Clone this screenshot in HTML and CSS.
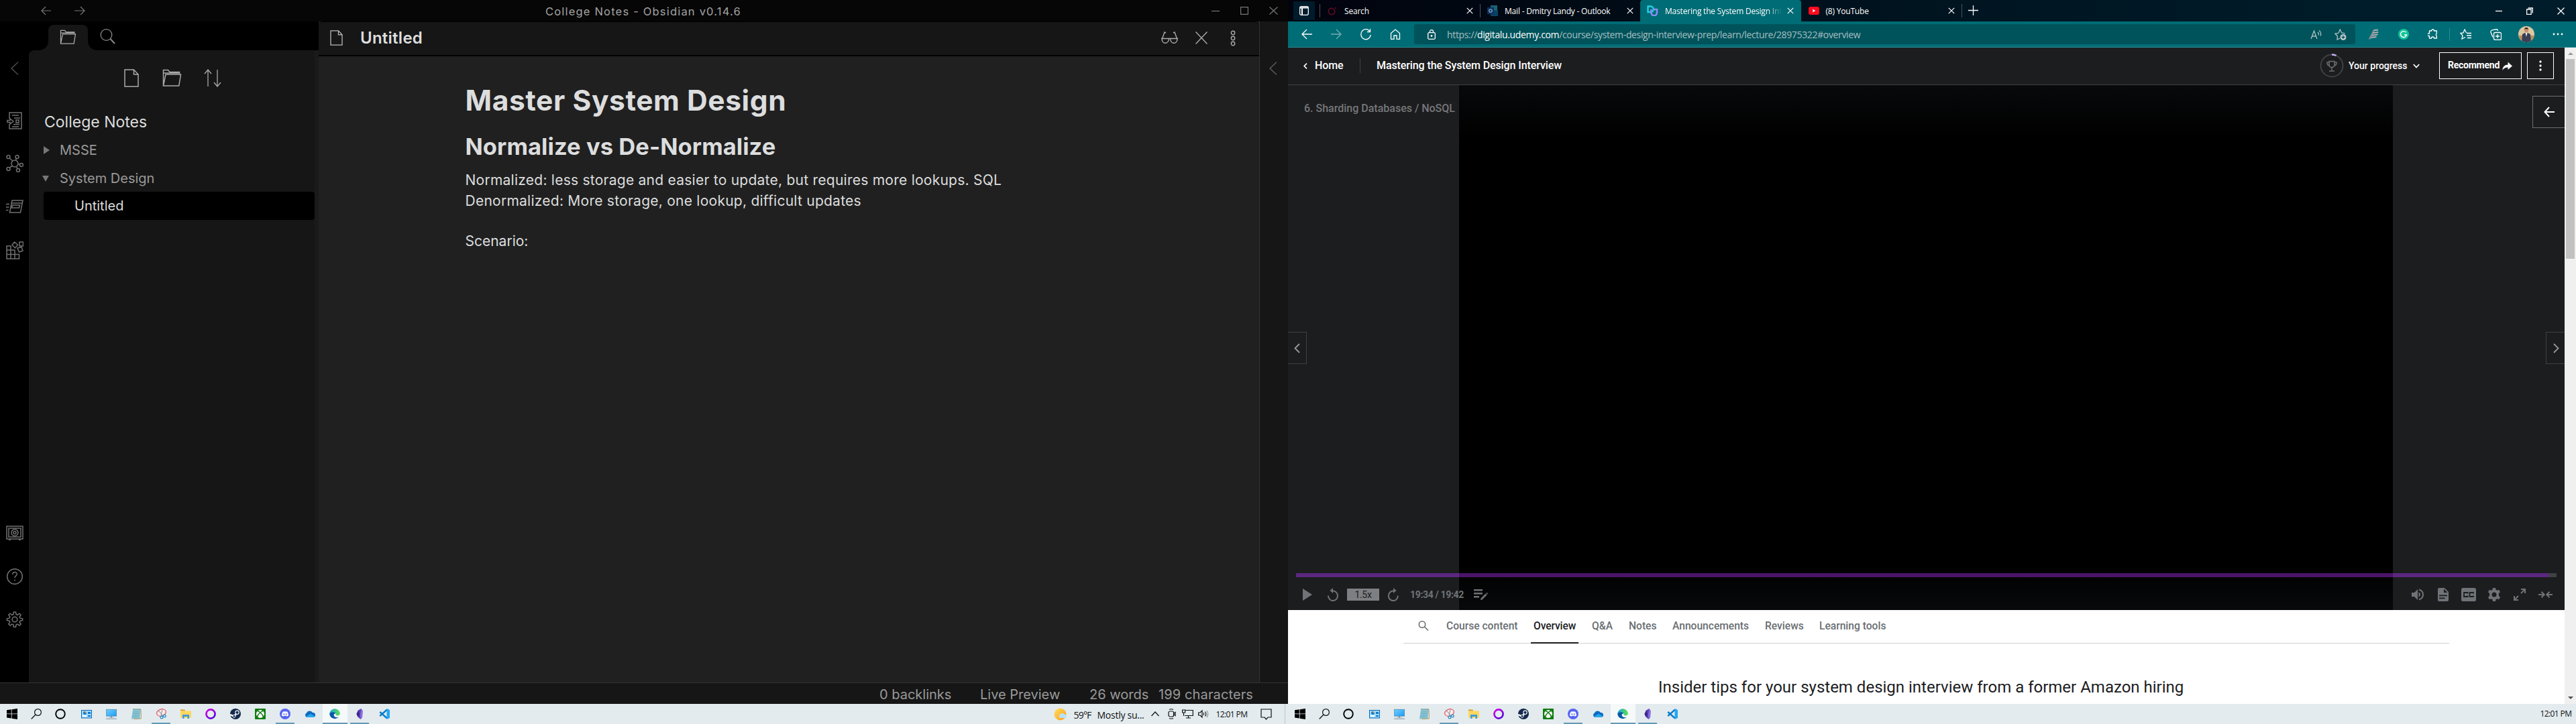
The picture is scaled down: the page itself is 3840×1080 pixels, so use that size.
FILE: index.html
```html
<!DOCTYPE html>
<html lang="en">
<head>
<meta charset="utf-8">
<title>Desktop</title>
<link rel="stylesheet" href="styles.css">
</head>
<body>
<svg class="defs" aria-hidden="true">
  <defs>
    <linearGradient id="g-opera" x1="0" y1="0" x2="1" y2="1"><stop offset="0" stop-color="#d800e8"/><stop offset="1" stop-color="#4b00d8"/></linearGradient>
    <linearGradient id="g-edge" x1="0" y1="0" x2="1" y2="0"><stop offset="0" stop-color="#1aa6e0"/><stop offset="1" stop-color="#5fe04a"/></linearGradient>
    <linearGradient id="g-sun" x1="0" y1="0" x2="1" y2="1"><stop offset="0" stop-color="#ffe05a"/><stop offset="1" stop-color="#ff9a1a"/></linearGradient>
    <linearGradient id="g-mon" x1="0" y1="0" x2="1" y2="1"><stop offset="0" stop-color="#6fd0ff"/><stop offset="1" stop-color="#1e9bf5"/></linearGradient>
    <symbol id="i-win" viewBox="0 0 16 16"><path d="M0 2.3 6.8 1.3V7.5H0zM7.6 1.2 16 0v7.5H7.6zM0 8.3h6.8v6.3L0 13.6zM7.6 8.3H16V16l-8.4-1.2z" fill="#000"/></symbol>
    <symbol id="i-find" viewBox="0 0 16 16"><circle cx="10.5" cy="5.5" r="4.9" fill="none" stroke="#111" stroke-width="1.2"/><path d="M7 9 .7 15.5" stroke="#111" stroke-width="1.3"/></symbol>
    <symbol id="i-ring" viewBox="0 0 16 16"><circle cx="8" cy="8" r="6.8" fill="none" stroke="#000" stroke-width="1.9"/></symbol>
    <symbol id="i-card" viewBox="0 0 16 16"><rect x=".5" y="2.5" width="15" height="11.5" fill="#9fdcff" stroke="#0a66b0"/><circle cx="5.5" cy="6.5" r="2.5" fill="#0a78d0"/><path d="M5.5 4a2.500 2.500 0 0 1 2.500 2.500H5.500z" fill="#ffa62b"/><path d="M10 5h4v3h-4zM10 10h4v2h-4z" fill="#0a78d0"/><path d="M2 11h6" stroke="#fff" stroke-width="2"/></symbol>
    <symbol id="i-mon" viewBox="0 0 16 16"><rect x=".3" y="1.200" width="15.400" height="10" fill="url(#g-mon)" stroke="#4a7c9c" stroke-width=".6"/><path d="M7 11h2v2.500H7z" fill="#6f8c9c"/><path d="M0 15.300h16" stroke="#8aa2b0" stroke-width="1.200"/><path d="M4 13.300h8" stroke="#9ab" stroke-width=".8"/></symbol>
    <symbol id="i-note" viewBox="0 0 16 16"><path d="M3 1.500h12L13.500 15.500H.8z" fill="#8cc7d6"/><path d="M15 1.500l.4 13.500-11 .6" fill="none" stroke="#b79a5c"/><path d="M3.500 5h9.500M3 7.500h9.500M2.600 10h9.500M2.300 12.500h9.500" stroke="#5c9fb4" stroke-width=".7"/><path d="M3.500 1h11" stroke="#365" stroke-width="1.600" stroke-dasharray="1 1"/></symbol>
    <symbol id="i-snip" viewBox="0 0 16 16"><ellipse cx="8.500" cy="6" rx="7" ry="5" transform="rotate(-20 8.500 6)" fill="#fbeaea" stroke="#e0525a" stroke-width="1.200"/><path d="M4 2.500 11 11M10 1.500 8 11" stroke="#8a95a0" stroke-width="1.100"/><circle cx="9" cy="13" r="1.900" fill="none" stroke="#2a8bc8" stroke-width="1.200"/><circle cx="13.300" cy="11" r="1.900" fill="none" stroke="#2a8bc8" stroke-width="1.200"/></symbol>
    <symbol id="i-fold" viewBox="0 0 16 16"><path d="M0 1.500h6l1.500 2H0z" fill="#d99a12"/><path d="M0 3.500h16V14H0z" fill="#ffd75e"/><path d="M3 15V9h10v6h-2.500v-3h-5v3z" fill="#3f9be0"/></symbol>
    <symbol id="i-opera" viewBox="0 0 16 16"><circle cx="8" cy="8" r="6.600" fill="none" stroke="url(#g-opera)" stroke-width="2.600"/></symbol>
    <symbol id="i-steam" viewBox="0 0 16 16"><circle cx="8" cy="8" r="8" fill="#14294d"/><path d="M0 9l6 2.500L10 7" stroke="#fff" stroke-width="2.400" fill="none"/><circle cx="10.500" cy="5.800" r="2.700" fill="#14294d" stroke="#fff" stroke-width="1.100"/><circle cx="6" cy="11.300" r="2" fill="#14294d" stroke="#fff"/></symbol>
    <symbol id="i-xbox" viewBox="0 0 16 16"><rect width="16" height="16" rx="1" fill="#107c10"/><circle cx="8" cy="8" r="6" fill="#fff"/><path d="M4 3.500C6 4 8 6 8 6s2-2 4-2.500M8 6c-3 2.500-4.500 5-4.500 7.500M8 6c3 2.500 4.500 5 4.500 7.500" fill="none" stroke="#107c10" stroke-width="1.600"/></symbol>
    <symbol id="i-disc" viewBox="0 0 16 16"><circle cx="8" cy="8" r="8" fill="#5865f2"/><path d="M4.500 4.800Q8 3.500 11.500 4.800 13 7.500 12.900 10.500L10.700 11.700 10 10.700H6l-.7 1L3.100 10.500Q3 7.500 4.500 4.800z" fill="#fff"/><circle cx="6.300" cy="8.300" r="1.100" fill="#5865f2"/><circle cx="9.700" cy="8.300" r="1.100" fill="#5865f2"/></symbol>
    <symbol id="i-cloud" viewBox="0 0 16 16"><path d="M3.500 13A3.500 3.500 0 0 1 3 6.500 5 5 0 0 1 12 6a3.500 3.500 0 0 1 1 7z" fill="#0f6cc4"/><path d="M2 12 9 8l6.500 3.500A2.500 2.500 0 0 1 13 13H3.500z" fill="#28a8ea"/></symbol>
    <symbol id="i-edge" viewBox="0 0 16 16"><path d="M.2 8A7.900 7.900 0 0 1 15.900 7c.1 2-1.500 3.300-3.300 3.300H9.500C10 9 9.800 6.500 7 6.300 4 6.200.8 7 .2 8z" fill="url(#g-edge)"/><path d="M.2 8C.8 4.800 8.500 4 9.300 7.500 6 6.500 5.500 12 9.500 13c2 .5 4-.3 5-1A8 8 0 0 1 .2 8z" fill="#0c59a4"/><path d="M9 7.500c-2 1-2.200 4.500 1 5.500 1.800.4 3.500-.2 4.500-1-1 .2-3.500.2-5-1.700z" fill="#e9f4fb"/></symbol>
    <symbol id="i-obs" viewBox="0 0 16 16"><path d="M10.500 0 12.500 3.500 12 13 9.500 16 5.500 12.500 3.500 8 6 2.500z" fill="#5b3fb8"/><path d="M10.500 0 12.500 3.500 12 13 9.500 16 9 9z" fill="#8b6fe0"/><path d="M6 2.500 8 9l-2.500 3.500L3.500 8z" fill="#3c2585"/></symbol>
    <symbol id="i-code" viewBox="0 0 16 16"><path d="M1.300 5 12 14.500M1.300 11 12 1.500" stroke="#0b7cc9" stroke-width="2.400"/><path d="M11.500 0 16 2v12l-4.500 2z" fill="#24a8f2"/></symbol>
    <symbol id="i-x" viewBox="0 0 10 10"><path d="M.8.8l8.400 8.400M9.200.8.800 9.200" stroke="currentColor" stroke-width="1.200" fill="none"/></symbol>
    <symbol id="i-folder" viewBox="0 0 28 26"><path d="M1 25V1.500h7l2.500 3H25V8M1 25 4.500 8H27l-2.800 17zM1 6h23" fill="none" stroke="currentColor" stroke-width="1.500"/></symbol>
    <symbol id="i-file" viewBox="0 0 22 27"><path d="M1 1h13.500L21 8v18H1zM14.500 1v7H21" fill="none" stroke="currentColor" stroke-width="1.500"/></symbol>
    <symbol id="i-chev" viewBox="0 0 12 20"><path d="M11 .6 1 10l10 9.400" fill="none" stroke="currentColor" stroke-width="1.300"/></symbol>
  </defs>
</svg>

<div class="desktop">
  <section class="screen">
    <div class="obsidian">
      <header class="ob-title">
        <svg width="15" height="14" viewBox="0 0 15 14"><path d="M15 7H1M7 1 1 7l6 6"/></svg>
        <svg width="16" height="14" viewBox="0 0 16 14"><path d="M0 7h15M9 1l6 6-6 6"/></svg>
        <span class="t-title">College Notes - Obsidian v0.14.6</span>
        <svg width="12" height="12" viewBox="0 0 12 12"><path d="M0 6.500h12"/></svg>
        <svg width="12" height="12" viewBox="0 0 12 12"><path d="M.6.600h10.800v10.800H.6z"/></svg>
        <svg width="13" height="12" viewBox="0 0 13 12"><path d="M.5.500l12 11M12.500.500l-12 11"/></svg>
      </header>
      <div class="ob-body">
        <nav class="ribbon">
          <svg class="r-chev" width="12" height="20"><use href="#i-chev"/></svg>
          <svg class="r-switch" width="24" height="26" viewBox="0 0 24 26"><path d="M4 10V1h18v24H4v-7M8 5h10M11 9h9M10 18.500h9M8 22h10M1 12.500h4V10l5 4-5 4v-2.500H1zM14 12h4v4h-4z"/></svg>
          <svg class="r-graph" width="26" height="26" viewBox="0 0 26 26"><circle cx="13" cy="13" r="5"/><circle cx="3.500" cy="3" r="2.500"/><circle cx="16.500" cy="3" r="2.500"/><circle cx="23" cy="15" r="2.500"/><circle cx="18" cy="23" r="2.500"/><circle cx="3.500" cy="21" r="2.500"/><path d="M5 5l5 4M15.500 5.500 14.500 8M18 14h2.500M15.500 17.500 17 20.500M9.500 16.500 5 19"/></svg>
          <svg width="26" height="20" viewBox="0 0 26 20"><path d="M9 1h16l-3.500 18h-16zM8 5h16M9.500 8h11l-1 4h-11zM0 6.500h5M0 11h4.500M0 15.500h3.500"/></svg>
          <svg width="26" height="27" viewBox="0 0 26 27"><path d="M1 7h6v19H1zM1 13h12v13M1 19.500h18.500V26H1M7 7v6M13 19v7M20 1h5.500v6H20zM12.500 1l5 4-4 5-4.500-4.500zM17 10l6-1.500L25 14l-5.500 2z"/></svg>
          <span class="push"></span>
          <svg width="26" height="22" viewBox="0 0 26 22"><path d="M1 1h24v19H1zM4 4h18v13H4zM4 21.500h3M19 21.500h3M4 8v5"/><circle cx="13" cy="10.500" r="5"/><circle cx="13" cy="10.500" r="2"/></svg>
          <svg class="r-help" width="26" height="24" viewBox="0 0 26 24"><circle cx="13" cy="12" r="11.300"/><path d="M9.800 9c0-5 6.800-4.500 6.500-.5-.2 2.500-3.300 2.500-3.300 5.500M13 16.500v2"/></svg>
          <svg width="26" height="24" viewBox="0 0 26 24"><path d="M11.500 1h3l.6 3.500 2 .8L20 3.200l2.200 2.100-2 2.900.8 2 3.600.6v2.700l-3.600.7-.8 2 2 2.800-2.200 2.100-2.900-2-2 .8-.6 3.400h-3l-.6-3.400-2-.8-2.900 2-2.200-2.100 2-2.800-.8-2-3.600-.7v-2.700l3.600-.6.8-2-2-2.900L6 3.200l2.900 2.100 2-.8z"/><circle cx="13" cy="12" r="3.800"/></svg>
        </nav>
        <aside class="side">
          <div class="side-tabs">
            <span class="side-tab"><svg width="25" height="22"><use href="#i-folder"/></svg></span>
            <svg class="side-find" width="23" height="23" viewBox="0 0 23 23"><circle cx="9.500" cy="9" r="8.300"/><path d="M15.500 15 22 22" stroke-width="2"/></svg>
          </div>
          <div class="side-panel">
            <div class="side-tools">
              <svg width="22" height="27"><use href="#i-file"/></svg>
              <svg width="29" height="26"><use href="#i-folder"/></svg>
              <svg width="26" height="27" viewBox="0 0 26 27"><path d="M6 26V1M1 7l5-6 5 6M20 1v25M15 20l5 6 5-6"/></svg>
            </div>
            <div class="vault"><span class="t-vault">College Notes</span></div>
            <div class="node"><i class="tri right"></i><span class="t-node">MSSE</span></div>
            <div class="node"><i class="tri down"></i><span class="t-node">System Design</span></div>
            <div class="leaf"><span class="t-node">Untitled</span></div>
          </div>
        </aside>
        <main class="editor">
          <header class="ed-head">
            <svg class="file" width="19" height="23"><use href="#i-file"/></svg>
            <span class="t-file">Untitled</span>
            <svg width="25" height="19" viewBox="0 0 25 19"><path d="M1 12 5 1l2 1M24 12 20 1l-2 1M0 10.500h25M1 10.500c0 9 10 9 10.500 0M13.500 10.500c.5 9 10.500 9 10.500 0"/></svg>
            <svg width="18" height="19" viewBox="0 0 18 19"><path d="M.5.500l17 18M17.500.500l-17 18"/></svg>
            <svg width="8" height="24" viewBox="0 0 8 24"><circle cx="4" cy="4" r="2.700"/><circle cx="4" cy="12" r="2.700"/><circle cx="4" cy="20" r="2.700"/></svg>
          </header>
          <article class="note">
            <h1>Master System Design</h1>
            <h2>Normalize vs De-Normalize</h2>
            <p>Normalized: less storage and easier to update, but requires more lookups. SQL</p>
            <p>Denormalized: More storage, one lookup, difficult updates</p>
            <p class="gap">Scenario:</p>
          </article>
        </main>
        <div class="ob-right"><svg width="12" height="20"><use href="#i-chev"/></svg></div>
      </div>
      <footer class="ob-status">
        <span>0 backlinks</span><span>Live Preview</span><span>26 words</span><span class="chars">199 characters</span>
      </footer>
    </div>
    <div class="taskbar">
      <div class="apps">
        <span class="n"><svg><use href="#i-win"/></svg></span><span class="n"><svg><use href="#i-find"/></svg></span><span class="n"><svg><use href="#i-ring"/></svg></span>
        <span class="first"><svg><use href="#i-card"/></svg></span><span><svg><use href="#i-mon"/></svg></span><span><svg><use href="#i-note"/></svg></span><span class="run"><svg><use href="#i-snip"/></svg></span><span><svg><use href="#i-fold"/></svg></span><span><svg><use href="#i-opera"/></svg></span><span><svg><use href="#i-steam"/></svg></span><span><svg><use href="#i-xbox"/></svg></span><span class="run"><svg><use href="#i-disc"/></svg></span><span><svg><use href="#i-cloud"/></svg></span><span class="run on"><svg><use href="#i-edge"/></svg></span><span class="run"><svg><use href="#i-obs"/></svg></span><span><svg><use href="#i-code"/></svg></span>
      </div>
      <div class="tray">
        <svg width="20" height="19" viewBox="0 0 20 19"><circle cx="9.500" cy="9.500" r="9" fill="url(#g-sun)"/><path d="M9 15a3 3 0 0 1 0-5 4 4 0 0 1 7-.5 3 3 0 0 1 1.500 5.500z" fill="#b9e2fa"/></svg>
        <span class="t-wx deg">59°F</span>
        <span class="t-wx">Mostly su...</span>
        <svg width="12" height="8" viewBox="0 0 12 8"><path d="M.5 7 6 1l5.500 6"/></svg>
        <svg width="12" height="16" viewBox="0 0 12 16"><rect x="1" y="4" width="7.500" height="8" rx="2"/><path d="M8.500 7.500 11 5.500v5L8.500 8.500M2 1.500Q5 0 8 1.500M2 14.500Q5 16 8 14.500"/></svg>
        <svg width="17" height="14" viewBox="0 0 17 14"><path d="M5 1.500h11.300v8H4M9.500 9.500V13M6 13h7M.6 1h4v4h-4zM2.500 5v5"/></svg>
        <svg width="17" height="14" viewBox="0 0 17 14"><path d="M.6 5v4h2.500L6 12V2L3.100 5zM8 5q1.500 2 0 4M10.500 3.500q2.500 3.500 0 7"/><path d="M13 2q3.500 5 0 10" stroke-opacity=".4"/></svg>
        <span class="t-clock">12:01 PM</span>
        <svg width="17" height="17" viewBox="0 0 17 17"><path d="M1 1h15v12h-5L8.500 16 6 13H1z"/></svg>
        <i class="peek"></i>
      </div>
    </div>
  </section>

  <section class="screen">
    <div class="edge">
      <header class="tabs">
        <span class="actions"><svg width="14" height="14" viewBox="0 0 14 14"><rect x=".7" y=".7" width="12.600" height="12.600" rx="2"/><path d="M1 2.500h12M4 3v10" stroke-width="2"/></svg></span>
        <div class="tab one"><svg width="14" height="13" viewBox="0 0 14 13"><circle cx="6" cy="7" r="4.700" fill="none" stroke="#5a0b22" stroke-width="1.800"/><circle cx="12" cy="2" r="1.200" fill="#5a0b22"/></svg><span class="t-tab">Search</span><svg class="x"><use href="#i-x"/></svg></div>
        <div class="tab two"><svg width="16" height="16" viewBox="0 0 16 16"><path d="M5 0h10v14H5z" fill="#1a6478"/><path d="M5 8l11-1v9H5z" fill="#0a4164"/><path d="M0 3h10v10H0z" fill="#0a3260"/><circle cx="5" cy="8" r="2.200" fill="none" stroke="#8aa4b8" stroke-width="1.300"/></svg><span class="t-tab">Mail - Dmitry Landy - Outlook</span><svg class="x"><use href="#i-x"/></svg></div>
        <div class="tab three"><svg width="17" height="16" viewBox="0 0 17 16"><path d="M1.500 1.500H6a3.500 4 0 0 1 0 8.500H1.500z" fill="none" stroke="#23cfe6" stroke-width="2.400"/><path d="M6.500 6v5a4 4 0 0 0 8.500 0V6h-5" fill="none" stroke="#8d8cf5" stroke-width="2.600"/></svg><span class="t-tab fade">Mastering the System Design Int</span><svg class="x"><use href="#i-x"/></svg></div>
        <div class="tab four"><svg width="16" height="12" viewBox="0 0 16 12"><rect width="16" height="12" rx="3" fill="#ff0a1e"/><path d="M6.300 3.500v5l4-2.500z" fill="#fff"/></svg><span class="t-tab">(8) YouTube</span><svg class="x"><use href="#i-x"/></svg></div>
        <svg class="plus" width="15" height="15" viewBox="0 0 15 15"><path d="M7.500 0v15M0 7.500h15"/></svg>
        <div class="win">
          <svg width="10" height="10" viewBox="0 0 10 10"><path d="M0 5.500h10"/></svg>
          <svg width="10" height="11" viewBox="0 0 10 11"><path d="M.6 3h6.500v7.400H.6zM2.500 1h6.800v7.500"/></svg>
          <svg width="11" height="11" viewBox="0 0 11 11"><path d="M.5.500l10 10M10.500.500l-10 10"/></svg>
        </div>
      </header>
      <div class="bar">
        <svg width="16" height="16" viewBox="0 0 16 16"><path d="M16 8H1M8 1 1 8l7 7"/></svg>
        <svg class="off" width="16" height="16" viewBox="0 0 16 16"><path d="M0 8h15M8 1l7 7-7 7"/></svg>
        <svg width="16" height="17" viewBox="0 0 16 17"><path d="M14 4a7.200 7.500 0 1 0 1.200 5M14.500 0v4.500H10"/></svg>
        <svg width="16" height="16" viewBox="0 0 16 16"><path d="M1.500 6.500 8 1l6.500 5.500v9H10V10H6v5.500H1.500z"/></svg>
        <div class="url">
          <svg width="12" height="15" viewBox="0 0 12 15"><rect x=".7" y="4.700" width="10.600" height="9.600" rx="1.500"/><path d="M3.500 4.500V3a2.500 2.300 0 0 1 5 0v1.500"/><circle cx="6" cy="9.500" r=".8" fill="#fff"/></svg>
          <span class="t-url">https://<b>digitalu.udemy.com</b>/course/system-design-interview-prep/learn/lecture/28975322#overview</span>
          <svg class="dim" width="17" height="15" viewBox="0 0 17 15"><path d="M1 14 5.500 2 10 14M2.800 10h5.500M11 4q2 2 1 4.500M13 1.500q4 3 2 8"/></svg>
          <svg class="dim" width="18" height="17" viewBox="0 0 18 17"><path d="M8 14.200 4 16l.5-5L1 7.300l5-1L8.300 1l2.400 5 5 .8"/><circle cx="13" cy="12.500" r="4.500" fill="#bfc9cb" stroke="none"/><path d="M13 10v5M10.500 12.500h5" stroke="#00535b"/></svg>
        </div>
        <svg width="16" height="16" viewBox="0 0 16 16"><path d="M1 15.500 8.500 1" stroke="#8d8f92" stroke-width="2.200"/><path d="M8 2.200l6-.7M6.300 6.300l8-1.300M5 9.700l8.500-1.300M3.500 13l8-1" stroke="#b3aeb0" stroke-width="2"/></svg>
        <svg width="16" height="16" viewBox="0 0 16 16"><circle cx="8" cy="8" r="8" fill="#15c39a" stroke="none"/><path d="M11.500 5.200A4.500 4.500 0 1 0 12.500 9H9" stroke-width="1.400"/></svg>
        <svg width="16" height="16" viewBox="0 0 16 16"><path d="M2.500 3h3a2 2 0 0 1 4 0h3.800v4a2 2 0 0 0 0 3.500V14H9.500a2 2 0 0 0-4 0h-3v-3.500a2 2 0 1 1 0-3.500z"/></svg>
        <i class="vsep"></i>
        <svg width="17" height="16" viewBox="0 0 17 16"><path d="M9.500 6 7 1 5 6 .8 6.500 4 10l-1 5 5-2.500M10 6.500h7M10 10h7M11 13.500h6"/></svg>
        <svg width="17" height="17" viewBox="0 0 17 17"><rect x="5.500" y="5.500" width="11" height="11" rx="2"/><path d="M11 8v6M8 11h6M4 12.500 1 5Q.5 3 2.500 2l7-1.500Q11 .5 11.500 3"/></svg>
        <svg width="24" height="24" viewBox="0 0 24 24"><clipPath id="av"><circle cx="12" cy="12" r="12"/></clipPath><g clip-path="url(#av)" stroke="none"><path fill="#dcc7a0" d="M0 0h24v24H0z"/><path fill="#b8905f" d="M0 14h24v10H0z"/><path fill="#3b3f56" d="M6 12l4-2h4l4 2 1 12H5z"/><path fill="#f0ece8" d="M10.500 10h3L12 16z"/><circle cx="12" cy="6.500" r="3" fill="#c89272"/><path fill="#2a1d18" d="M9 5.500Q9 2 12 2t3 3.500l-1-1.200h-4z"/></g></svg>
        <svg width="16" height="4" viewBox="0 0 16 4"><g fill="#fff" stroke="none"><circle cx="2" cy="2" r="1.400"/><circle cx="8" cy="2" r="1.400"/><circle cx="14" cy="2" r="1.400"/></g></svg>
      </div>
      <div class="view">
        <div class="page">
          <header class="course">
            <svg width="6" height="9" viewBox="0 0 6 9"><path d="M5 .7 1.200 4.500 5 8.300" stroke-width="1.700"/></svg>
            <span class="t-course">Home</span>
            <i class="csep"></i>
            <span class="t-course">Mastering the System Design Interview</span>
            <svg width="36" height="36" viewBox="0 0 36 36"><circle cx="18" cy="18" r="16.500" stroke="#3e4143" stroke-width="2"/><path d="M18 1.500a16.500 16.500 0 0 1 6.500 1.300" stroke="#c0adf0" stroke-width="2.400"/><path d="M14 11.500h8v5q0 4-4 4t-4-4zM14 13h-3q0 5 4 5M22 13h3q0 5-4 5M18 20.500v4.500M14 26h8" stroke="#6a6f73" stroke-width="1.500"/></svg>
            <span class="t-prog">Your progress</span>
            <svg width="10" height="7" viewBox="0 0 10 7"><path d="M.8 1 5 5.500 9.200 1" stroke-width="1.800"/></svg>
            <span class="rec"><span class="t-rec">Recommend</span><svg width="15" height="13" viewBox="0 0 15 13"><path d="M0 13Q1 4.500 8.500 4.500V.5L15 6.500 8.500 12V8.500Q3 8.500 0 13z"/></svg></span>
            <span class="more"><svg width="4" height="16" viewBox="0 0 4 16"><g fill="#fff" stroke="none"><circle cx="2" cy="2" r="1.700"/><circle cx="2" cy="8" r="1.700"/><circle cx="2" cy="14" r="1.700"/></g></svg></span>
          </header>
          <div class="player">
            <div class="letter">
              <span class="t-lec">6. Sharding Databases / NoSQL</span>
              <span class="nav prev"><svg width="9" height="15" viewBox="0 0 9 15"><path d="M8 1 1.500 7.500 8 14"/></svg></span>
            </div>
            <div class="video"></div>
            <div class="letter">
              <span class="open"><svg width="16" height="16" viewBox="0 0 16 16"><path d="M16 8H1.500M8 1 1.500 8 8 15"/></svg></span>
              <span class="nav next"><svg width="9" height="15" viewBox="0 0 9 15"><path d="M1 1l6.500 6.500L1 14"/></svg></span>
            </div>
            <div class="controls">
              <div class="track"><i></i></div>
              <div class="ctl">
                <svg width="14" height="18" viewBox="0 0 14 18"><path d="M0 0v18l14-9z"/></svg>
                <svg width="16" height="20" viewBox="0 0 16 20"><path d="M8 0v8L3.500 4z"/><path class="ln" d="M7 4.500a7 7.300 0 1 1-6 7"/></svg>
                <span class="rate">1.5x</span>
                <svg width="17" height="20" viewBox="0 0 17 20"><path d="M9 0v8l4.500-4z"/><path class="ln" d="M9 4.500a7 7.300 0 1 0 6.800 7"/></svg>
                <span class="t-time">19:34 / 19:42</span>
                <svg width="21" height="18" viewBox="0 0 21 18"><path d="M0 1h13v2.500H0zM0 6h13v2.500H0zM0 11h8v2.500H0zM10.500 14.500l7-7 2 2-7 7-2.500.8zM18.200 6.800l1-1 2 2-1 1z"/></svg>
                <svg width="18" height="18" viewBox="0 0 18 18"><path d="M0 6v6h4l5 5V1L4 6zM10.500 5v8q2.500-1.500 2.500-4t-2.500-4z"/><path class="ln" d="M11 1.500q6 2 6 7.500t-6 7.500"/></svg>
                <svg width="16" height="20" viewBox="0 0 16 20"><path fill-rule="evenodd" d="M2 0h8l6 6v12q0 2-2 2H2q-2 0-2-2V2Q0 0 2 0zM9 1.500V7h5.500zM2 10.500v1.700h12v-1.700zM2 14.500v1.700h8.500v-1.700z"/></svg>
                <svg width="22" height="20" viewBox="0 0 22 20"><rect width="22" height="20" rx="2.500"/><path class="cc" d="M9.500 8.500V7H4v6h5.500v-1.500M18 8.500V7h-5.500v6H18v-1.500"/></svg>
                <svg width="18" height="20" viewBox="0 0 18 20"><path fill-rule="evenodd" d="M7 0h4l.6 2.800 1.800 1 2.700-1L18 6.200 15.900 8v4l2.100 1.800-1.900 3.400-2.700-1-1.800 1L11 20H7l-.6-2.800-1.800-1-2.700 1L0 13.800 2.100 12V8L0 6.200l1.900-3.400 2.700 1 1.800-1zM9 6.500a3.500 3.500 0 1 0 0 7 3.500 3.500 0 0 0 0-7z"/></svg>
                <svg width="18" height="18" viewBox="0 0 18 18"><path class="ln" d="M11 1h6v6M16.500 1.500 11 7M1 11v6h6M1.500 16.500 7 11"/></svg>
                <svg width="21" height="10" viewBox="0 0 21 10"><path class="ln" d="M0 5h8M4.500.8 8.700 5 4.500 9.200M21 5h-8M16.500.8 12.300 5l4.200 4.200"/></svg>
              </div>
            </div>
          </div>
          <nav class="menu">
            <svg width="16" height="15" viewBox="0 0 16 15"><circle cx="6" cy="5.500" r="4.700"/><path d="M9.500 9l5.500 5.500"/></svg>
            <span>Course content</span><span class="cur">Overview</span><span>Q&amp;A</span><span>Notes</span><span>Announcements</span><span>Reviews</span><span>Learning tools</span>
          </nav>
          <p class="blurb">Insider tips for your system design interview from a former Amazon hiring</p>
        </div>
        <div class="scroll"><i class="up"></i><b></b><i class="dn"></i></div>
      </div>
    </div>
    <div class="taskbar">
      <div class="apps">
        <span class="n"><svg><use href="#i-win"/></svg></span><span class="n"><svg><use href="#i-find"/></svg></span><span class="n"><svg><use href="#i-ring"/></svg></span>
        <span class="first"><svg><use href="#i-card"/></svg></span><span><svg><use href="#i-mon"/></svg></span><span><svg><use href="#i-note"/></svg></span><span class="run"><svg><use href="#i-snip"/></svg></span><span><svg><use href="#i-fold"/></svg></span><span><svg><use href="#i-opera"/></svg></span><span><svg><use href="#i-steam"/></svg></span><span><svg><use href="#i-xbox"/></svg></span><span class="run"><svg><use href="#i-disc"/></svg></span><span><svg><use href="#i-cloud"/></svg></span><span class="run on"><svg><use href="#i-edge"/></svg></span><span class="run"><svg><use href="#i-obs"/></svg></span><span><svg><use href="#i-code"/></svg></span>
      </div>
      <span class="t-clock solo">12:01 PM</span>
    </div>
  </section>
</div>
</body>
</html>
```

FILE: styles.css
```css
* { box-sizing: border-box; }
body { margin: 0; width: 3840px; height: 1080px; overflow: hidden; background: #000; }
svg { display: block; flex: none; fill: none; }
i, b { font-style: normal; display: block; }
span { white-space: nowrap; }
.defs { position: absolute; width: 0; height: 0; }
.desktop { display: grid; grid-template-columns: 1920px 1920px; height: 1080px; }
.screen { display: grid; grid-template-rows: 1050px 30px; min-width: 0; }

/* Note-taking window */
.obsidian { display: grid; grid-template-rows: 32px 986px 32px; background: #000; font-family: Inter, sans-serif; color: #dcddde; min-height: 0; }
.ob-title { display: grid; grid-template-columns: 50px 702px 993px 43px 43px 28px; padding-left: 61px; align-items: center; background: #060606; color: #a3a3a3; }
.ob-title svg { stroke: #777; stroke-width: 1.2; }
.t-title { font-size: 16.5px; line-height: 30px; letter-spacing: 1.19px; padding-top: 2px; }
.ob-body { display: grid; grid-template-columns: 43px 432px 1402px 43px; }
.ribbon { display: flex; flex-direction: column; align-items: center; padding: 60px 0 82px; }
.ribbon svg { stroke: #707070; stroke-width: 1.5; margin-bottom: 42px; margin-right: -1px; }
.ribbon .r-chev { color: #555; margin-bottom: 55px; }
.ribbon .r-switch { margin-bottom: 38px; }
.ribbon .r-graph { margin-bottom: 41px; }
.ribbon .r-help { margin-bottom: 40px; }
.ribbon svg:last-child { margin-bottom: 0; }
.push { flex: 1; }
.side { display: grid; grid-template-rows: 43px 1fr; }
.side-tabs { display: flex; align-items: flex-end; padding-left: 29px; }
.side-tab { width: 59px; height: 38px; background: #161616; border-radius: 8px 8px 0 0; padding: 7px 0 0 17px; position: relative; color: #aaa; }
.side-tab::before, .side-tab::after { content: ""; position: absolute; bottom: 0; width: 13px; height: 13px; }
.side-tab::before { left: -13px; background: radial-gradient(circle at 0 0, #000 12.5px, #161616 13px); }
.side-tab::after { right: -13px; background: radial-gradient(circle at 100% 0, #000 12.5px, #161616 13px); }
.side-find { stroke: #888; stroke-width: 1.3; margin: 0 0 9px 18px; }
.side-panel { background: #161616; border-right: 6px solid #1a1a1a; border-radius: 8px 0 0 0; padding: 28px 0 0 22px; }
.side-tools { display: grid; grid-template-columns: 57px 62px 30px; padding-left: 120px; height: 61px; color: #aaa; }
.side-tools svg { stroke: #aaa; stroke-width: 1.3; }
.vault, .node { display: flex; align-items: center; height: 42px; }
.vault { height: 36px; padding-left: 1px; margin-bottom: 3px; }
.t-vault { font-size: 23px; }
.t-node { font-size: 20px; }
.node { color: #999; }
.tri { width: 24px; }
.tri::before { content: ""; display: block; width: 0; border: solid transparent; }
.right::before { border-width: 6px 0 6px 9px; border-left-color: #777; }
.down::before { border-width: 9px 5.5px 0; border-top-color: #777; margin-left: -2px; }
.leaf { display: flex; align-items: center; height: 42px; margin-top: -1px; background: #000; border-radius: 4px; padding-left: 46px; }
.editor { display: grid; grid-template-rows: 52px 1fr; background: #202020; }
.ed-head { display: grid; grid-template-columns: 45px 1194px 51px 52px 20px; padding: 0 0 2px 17px; align-items: center; background: #161616; border-top: 1px solid #000; border-bottom: 2px solid #000; border-radius: 6px 6px 0 0; color: #bbb; }
.ed-head svg { stroke: #aaa; stroke-width: 1.4; }
.t-file { font-size: 24px; font-weight: 600; letter-spacing: .25px; color: #dcddde; }
.note { padding: 41px 0 0 218.5px; }
h1, h2, p { margin: 0; white-space: nowrap; }
h1 { font-size: 42.5px; line-height: 50px; font-weight: 700; letter-spacing: .58px; }
h2 { font-size: 34.5px; line-height: 44px; font-weight: 700; letter-spacing: .07px; margin: 22px 0 13px; }
.note p { font-size: 21px; line-height: 30.5px; letter-spacing: .25px; }
.note .gap { margin-top: 30px; letter-spacing: 0; }
.ob-right { background: #161616; border-left: 1px solid #333; padding: 60px 0 0 14px; color: #666; }
.ob-status { display: grid; grid-template-columns: 150px 163px 103px 150px; padding: 3px 0 0 1311px; align-items: center; background: #161616; border-top: 1px solid #333; color: #999; font-size: 20px; }
.chars { letter-spacing: .12px; }

/* Taskbar */
.taskbar { display: flex; background: #e3ebee; font-family: "Open Sans", "Noto Sans", sans-serif; color: #111; }
.apps { display: flex; }
.apps span { width: 37px; height: 30px; padding: 7px 0 0 10.5px; position: relative; }
.apps .n { width: 36px; padding-left: 10px; }
.apps .first { margin-left: 2.5px; }
.apps svg { width: 16px; height: 16px; }
.run::after { content: ""; position: absolute; left: 4.5px; right: 4.5px; bottom: 0; height: 2px; background: #6499b5; }
.apps .on { background: #f5f9fa; }
.on::after { left: 0; right: 0; }
.tray { display: grid; grid-template-columns: 30px 35px 80px 25px 21px 24px 27px 66px 36px 1px; align-items: center; margin-left: 979px; }
.tray svg { stroke: #111; stroke-width: 1.2; }
.tray svg:first-child { stroke: none; }
.t-wx { font-size: 14px; letter-spacing: -.26px; padding-top: 2px; }
.deg { letter-spacing: -.8px; }
.t-clock { font-size: 12px; letter-spacing: -.6px; }
.peek { width: 1px; height: 30px; background: #bbc4c8; }
.solo { margin: 6px 0 0 1275px; }

/* Browser window */
.edge { display: grid; grid-template-rows: 32px 39px 979px; font-family: "Open Sans", "Noto Sans", sans-serif; color: #fff; min-height: 0; }
.edge svg { stroke: #fff; stroke-width: 1.3; }
.tabs { display: flex; background: linear-gradient(90deg, #02030d, #000b16 25%, #001420 50%, #001c2a 85%); }
.actions { width: 32px; height: 28px; margin: 2px 7px 0 8px; background: #001b2b; padding: 7px 9px; }
.tab { display: grid; align-items: center; height: 32px; position: relative; }
.tab > svg:first-child { stroke: none; }
.tab .x { width: 10px; height: 10px; }
.one { width: 239px; padding-left: 12px; grid-template-columns: 25px 182px 20px; }
.two { width: 239px; padding-left: 11px; grid-template-columns: 26px 182px 20px; }
.three { width: 239.5px; padding-left: 10px; grid-template-columns: 27px 182px 20px; background: #006c75; border-radius: 4px 4px 0 0; }
.four { width: 239px; padding-left: 11px; grid-template-columns: 26px 182px 20px; }
.one::before, .two::before, .four::after { content: ""; position: absolute; left: 0; top: 6px; width: 1px; height: 20px; background: #46525c; }
.four::after { left: 239px; }
.t-tab { font-size: 12px; letter-spacing: -.2px; }
.fade { justify-self: start; -webkit-mask-image: linear-gradient(90deg, #000 88%, transparent); mask-image: linear-gradient(90deg, #000 88%, transparent); }
.plus { margin: 8px 0 0 10px; }
.win { display: grid; grid-template-columns: 46px 46px 28px; align-items: center; margin-left: auto; }
.bar { display: grid; grid-template-columns: 44px 44px 44px 36px 1423px 44px 44px 32px 16px 45px 42px 51px 20px; padding-left: 20px; align-items: center; background: #006c75; border-bottom: 1px solid #2a8c94; }
.bar .off { opacity: .45; }
.url { display: grid; grid-template-columns: 29px 1287px 36px 20px; width: 1403px; height: 30px; padding-left: 20px; align-items: center; background: #00535b; border-radius: 3px; }
.t-url { font-size: 14px; letter-spacing: -.35px; color: #a8bfc2; }
.t-url b { display: inline; font-weight: 400; color: #fff; }
.url .dim { stroke: #b0c2c4; }
.vsep { width: 1px; height: 19px; background: #2a8c94; }
.view { display: grid; grid-template-columns: 1903px 17px; min-height: 0; }
.page { display: grid; grid-template-rows: 56px 783px 50px 90px; background: #fff; font-family: Roboto, sans-serif; overflow: hidden; }
.course { display: grid; grid-template-columns: 17px 67px 25px 1406px 43px 96px 39px 131px 40px; padding: 0 0 1px 23px; align-items: center; background: #1c1d1f; border-bottom: 1px solid #3e4143; }
.t-course { font-size: 16px; font-weight: 500; letter-spacing: -.1px; padding-bottom: 2px; }
.csep { width: 1px; height: 22px; background: #3e4143; }
.t-prog { font-size: 14px; font-weight: 500; }
.rec, .more { display: flex; align-items: center; border: 1px solid #fff; height: 40px; }
.rec { width: 123px; padding-left: 12px; gap: 4px; }
.edge .rec svg { fill: #fff; stroke: none; }
.more { width: 40px; justify-content: center; }
.t-rec { font-size: 14px; font-weight: 700; width: 77px; letter-spacing: -.25px; padding-bottom: 2px; }
.player { display: grid; grid-template-columns: 255px 1392px 256px; background: #1c1d1f; position: relative; color: #76777a; }
.video { background: linear-gradient(#08090b, #000 80px, #000 720px, #08090b); }
.letter { position: relative; }
.t-lec { display: block; font-size: 16px; font-weight: 500; padding: 25px 0 0 24px; }
.nav, .open { position: absolute; display: flex; align-items: center; height: 48px; border: 1px solid #3e4143; background: #1c1d1f; }
.nav { width: 28px; top: 368px; }
.edge .nav svg { stroke: #9a9b9d; stroke-width: 1.8; }
.prev { left: 0; border-left: 0; padding-left: 9px; }
.next { right: 0; border-right: 0; padding-left: 10px; }
.open { right: 0; top: 16px; width: 48px; border-right: 0; border-color: #6a6f73; padding-left: 16px; }
.edge .open svg { stroke-width: 2; }
.controls { position: absolute; left: 0; right: 0; bottom: 0; height: 57px; padding: 2px 12px 0; }
.track { height: 6px; background: rgba(106, 111, 115, .45); }
.track i { height: 6px; width: 1867px; background: linear-gradient(90deg, #5c2780 243px, #4a1568 243px, #4a1568 1635px, #5c2780 1635px); }
.ctl { display: grid; grid-template-columns: 37px 29px 60px 34px 95px 1398px 39px 35px 40px 38px 37px 21px; padding-left: 10px; align-items: center; height: 52px; color: #6f7377; }
.edge .ctl svg { fill: #6f7377; stroke: none; }
.edge .ctl .ln { fill: none; stroke: #6f7377; stroke-width: 2; }
.cc { fill: none; stroke: #1c1d1f; stroke-width: 1.8; }
.rate { width: 48px; height: 18px; background: #7d7f82; color: #1c1d1f; text-align: center; font-size: 14px; line-height: 18px; letter-spacing: -.3px; }
.t-time { font-size: 14px; font-weight: 700; letter-spacing: -.33px; }
.menu { display: grid; grid-template-columns: 42px 130px 87px 55px 65px 138px 81px 110px; width: 1559px; margin-left: 172px; padding: 0 0 2px 22px; align-items: center; border-bottom: 1px solid #d1d2d6; color: #6a6f73; font-size: 15.6px; font-weight: 500; position: relative; }
.edge .menu svg { stroke: #6a6f73; stroke-width: 1.6; }
.cur { color: #1c1d1f; position: relative; letter-spacing: -.1px; }
.cur::after { content: ""; position: absolute; left: -4px; width: 71px; bottom: -17px; height: 2px; background: #1c1d1f; }
.blurb { padding: 49px 0 0 552px; font-size: 24px; line-height: 32px; font-weight: 400; color: #1c1d1f; }
.scroll { background: #f0f0f0; display: flex; flex-direction: column; align-items: center; }
.scroll b { width: 13px; height: 298px; background: #c1c1c1; }
.scroll i { border: solid transparent; width: 0; }
.scroll .up { margin: 7px 0 6px; border-width: 0 4px 4px; border-bottom-color: #999; }
.scroll .dn { margin: auto 0 7px; border-width: 4px 4px 0; border-top-color: #505050; }
```
